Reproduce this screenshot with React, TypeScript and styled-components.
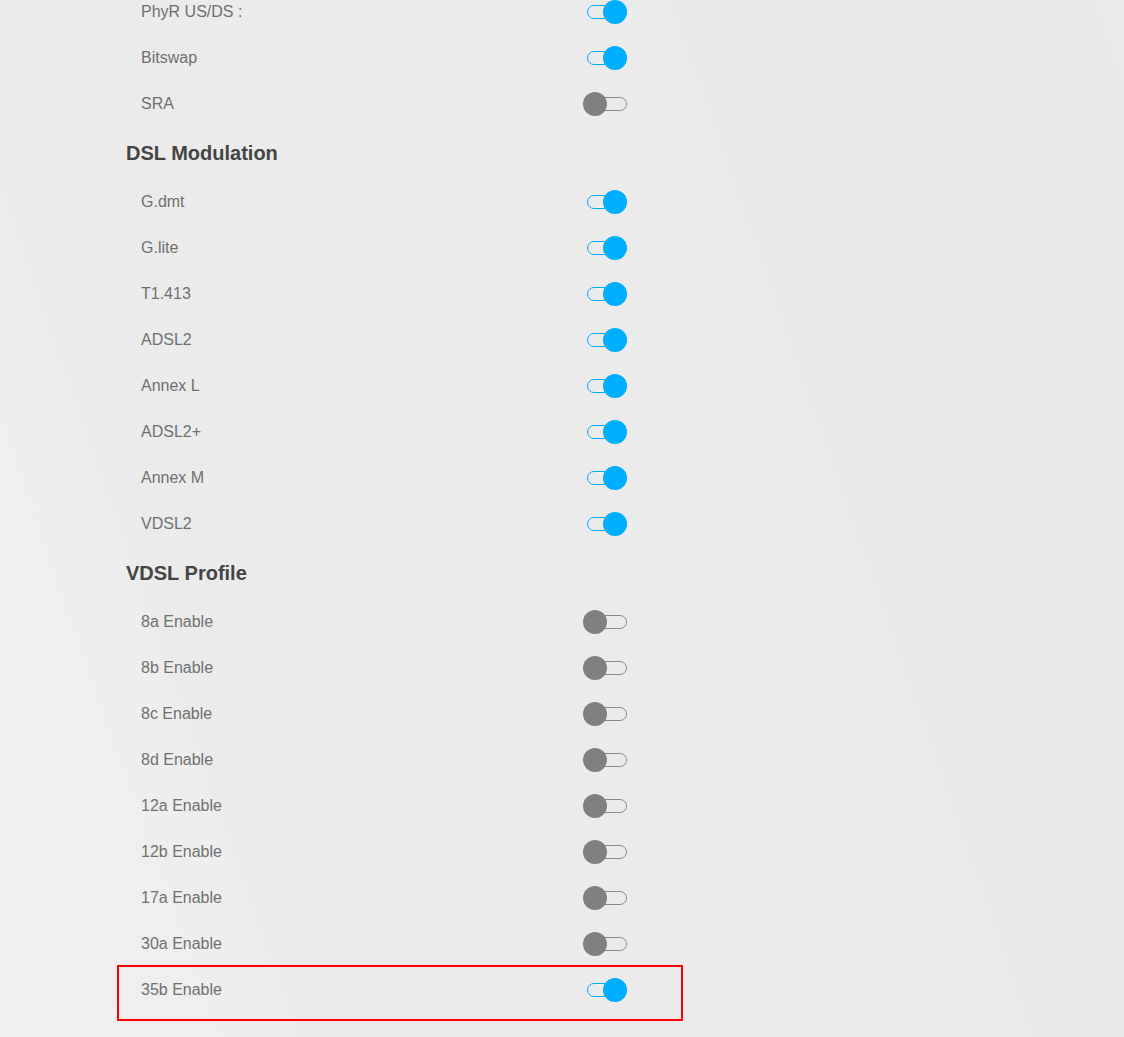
import React from "react";
import styled, { createGlobalStyle } from "styled-components";

const GlobalStyle = createGlobalStyle`
  html, body {
    margin: 0;
    padding: 0;
    height: 100%;
    overflow: hidden;
  }
  body {
    font-family: "Liberation Sans", Arial, sans-serif;
    background: linear-gradient(
      70.7deg,
      #efefef 0%,
      #eeeeee 19%,
      #ebebeb 20.5%,
      #ebebeb 68.8%,
      #e8e8e8 70.2%,
      #e8e8e8 97.5%,
      #ebebeb 98.5%
    );
    background-attachment: fixed;
  }
`;

const Page = styled.div`
  width: 1124px;
  height: 1037px;
  overflow: hidden;
`;

const Panel = styled.div`
  margin: -11px 0 0 119px;
  width: 562px;
  display: flex;
  flex-direction: column;
`;

const SectionBlock = styled.section<{ $extra: number }>`
  display: flex;
  flex-direction: column;
  padding-top: ${(p) => p.$extra}px;
`;

const SectionTitle = styled.h3`
  margin: 0;
  height: 51px;
  padding: 0 0 0 7px;
  box-sizing: border-box;
  display: flex;
  align-items: center;
  font-size: 20px;
  font-weight: 700;
  color: #444444;
`;

const Row = styled.div`
  height: 46px;
  display: flex;
  align-items: center;
  justify-content: space-between;
  padding: 0 54px 0 22px;
`;

const Label = styled.span`
  font-size: 16px;
  color: #707070;
`;

const Highlight = styled.div`
  padding-bottom: 6px;
  outline: 2px solid #ff0000;
`;

const Switch = styled.span`
  position: relative;
  width: 44px;
  height: 24px;
  display: flex;
  align-items: center;
  justify-content: flex-end;
`;

const Track = styled.span<{ $on: boolean }>`
  width: 40px;
  height: 14px;
  box-sizing: border-box;
  border-radius: 7px;
  border: ${(p) => (p.$on ? "1.5px solid #00aeff" : "1px solid #8a8a8a")};
`;

const Knob = styled.span<{ $on: boolean }>`
  position: absolute;
  top: 0;
  left: ${(p) => (p.$on ? "20px" : "0")};
  width: 24px;
  height: 24px;
  border-radius: 50%;
  background: ${(p) => (p.$on ? "#00aeff" : "#808080")};
`;

type Item = { label: string; on: boolean; highlight?: boolean };
type Section = { title?: string; extra: number; items: Item[] };

const sections: Section[] = [
  {
    extra: 0,
    items: [
      { label: "PhyR US/DS :", on: true },
      { label: "Bitswap", on: true },
      { label: "SRA", on: false },
    ],
  },
  {
    title: "DSL Modulation",
    extra: 1,
    items: [
      { label: "G.dmt", on: true },
      { label: "G.lite", on: true },
      { label: "T1.413", on: true },
      { label: "ADSL2", on: true },
      { label: "Annex L", on: true },
      { label: "ADSL2+", on: true },
      { label: "Annex M", on: true },
      { label: "VDSL2", on: true },
    ],
  },
  {
    title: "VDSL Profile",
    extra: 1,
    items: [
      { label: "8a Enable", on: false },
      { label: "8b Enable", on: false },
      { label: "8c Enable", on: false },
      { label: "8d Enable", on: false },
      { label: "12a Enable", on: false },
      { label: "12b Enable", on: false },
      { label: "17a Enable", on: false },
      { label: "30a Enable", on: false },
      { label: "35b Enable", on: true, highlight: true },
    ],
  },
];

function Toggle({ on }: { on: boolean }) {
  return (
    <Switch role="switch" aria-checked={on}>
      <Track $on={on} />
      <Knob $on={on} />
    </Switch>
  );
}

function SettingRow({ item }: { item: Item }) {
  const row = (
    <Row>
      <Label>{item.label}</Label>
      <Toggle on={item.on} />
    </Row>
  );
  return item.highlight ? <Highlight>{row}</Highlight> : row;
}

export default function App() {
  return (
    <Page>
      <GlobalStyle />
      <Panel>
        {sections.map((s, i) => (
          <SectionBlock key={i} $extra={s.extra}>
            {s.title && <SectionTitle>{s.title}</SectionTitle>}
            {s.items.map((it) => (
              <SettingRow key={it.label} item={it} />
            ))}
          </SectionBlock>
        ))}
      </Panel>
    </Page>
  );
}
